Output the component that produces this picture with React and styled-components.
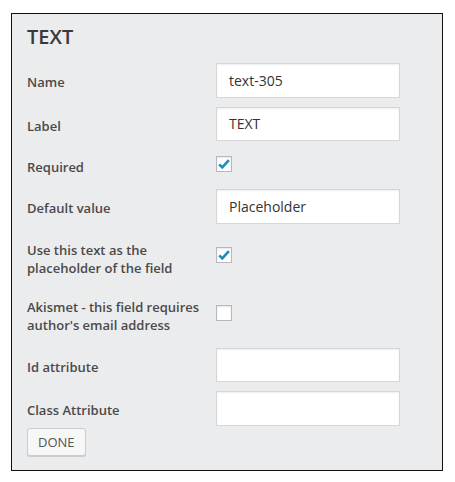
import styled, { createGlobalStyle } from "styled-components";

const GlobalStyle = createGlobalStyle`
  body {
    margin: 0;
    background: #fff;
    font-family: "Open Sans", "Liberation Sans", sans-serif;
  }
`;

const Panel = styled.div`
  box-sizing: border-box;
  width: 432px;
  margin: 13px 0 0 11px;
  padding: 9px 15px 14px 15px;
  border: 1px solid #111;
  background: #ebecee;
`;

const Title = styled.h3`
  margin: 0 0 12px;
  font-size: 20px;
  line-height: 28px;
  font-weight: 600;
  color: #3a3a3a;
`;

const Fields = styled.div`
  display: grid;
  grid-template-columns: 189px 184px;
  row-gap: 9px;
  align-items: center;
`;

const Label = styled.label`
  box-sizing: border-box;
  padding: 8px 10px 4px 0;
  font-size: 13px;
  line-height: 18.2px;
  font-weight: 600;
  color: #4a4a4a;
`;

const Input = styled.input`
  box-sizing: border-box;
  width: 184px;
  height: 34.5px;
  margin: 0;
  padding: 0 12px;
  border: 1px solid #d6d6d6;
  background: #fff;
  box-shadow: inset 0 1px 2px rgba(0, 0, 0, 0.07);
  font-family: "Open Sans", "Liberation Sans", sans-serif;
  font-size: 14px;
  color: #333;
  outline: none;
`;

const Box = styled.span`
  box-sizing: border-box;
  display: flex;
  align-items: center;
  justify-content: center;
  width: 16px;
  height: 16px;
  margin-bottom: 3px;
  border: 1px solid #b4b9be;
  background: #fff;
  box-shadow: inset 0 1px 2px rgba(0, 0, 0, 0.1);
`;

const Button = styled.button`
  display: block;
  margin-top: 2px;
  height: 28px;
  padding: 0 10px;
  border: 1px solid #cccccc;
  border-radius: 3px;
  background: #f7f7f7;
  box-shadow: 0 1px 0 #cccccc;
  font-family: "Open Sans", "Liberation Sans", sans-serif;
  font-size: 13px;
  line-height: 26px;
  color: #555;
  cursor: pointer;
`;

function Checkbox({ checked }) {
  return (
    <Box>
      {checked && (
        <svg width="14" height="14" viewBox="0 0 14 14">
          <path
            d="M2.2 7.4 L5.3 10.4 L11.9 3.2"
            fill="none"
            stroke="#1e8cbe"
            strokeWidth="2.6"
            strokeLinejoin="miter"
          />
        </svg>
      )}
    </Box>
  );
}

export default function App() {
  return (
    <>
      <GlobalStyle />
      <Panel>
        <Title>TEXT</Title>
        <Fields>
          <Label>Name</Label>
          <Input defaultValue="text-305" />
          <Label>Label</Label>
          <Input defaultValue="TEXT" />
          <Label>Required</Label>
          <Checkbox checked />
          <Label>Default value</Label>
          <Input defaultValue="Placeholder" />
          <Label>Use this text as the placeholder of the field</Label>
          <Checkbox checked />
          <Label>Akismet - this field requires author's email address</Label>
          <Checkbox />
          <Label>Id attribute</Label>
          <Input />
          <Label>Class Attribute</Label>
          <Input />
        </Fields>
        <Button type="button">DONE</Button>
      </Panel>
    </>
  );
}
